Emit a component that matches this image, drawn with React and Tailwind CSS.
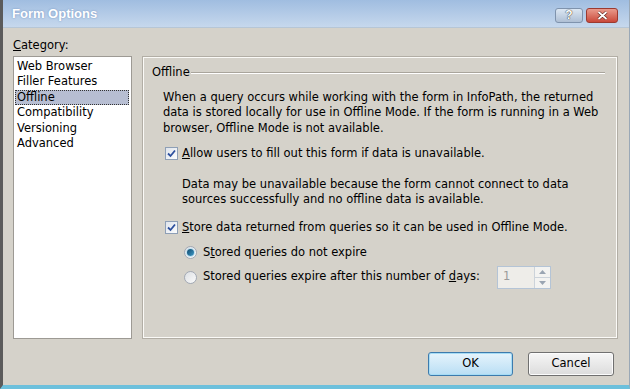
import React from 'react';

const font = "font-['DejaVu_Sans',Tahoma,sans-serif]";

function CheckBox() {
  return (
    <span className="w-[13px] h-[13px] shrink-0 border border-[#8e9fb6] bg-gradient-to-br from-[#dfe4ec] to-[#fbfcfd] flex items-center justify-center">
      <svg width="9" height="9" viewBox="0 0 9 9">
        <path d="M1 4.5 L3.5 7 L8 1.5" fill="none" stroke="#2c4f9e" strokeWidth="1.8" />
      </svg>
    </span>
  );
}

function Radio({ checked }) {
  return (
    <span className="w-[13px] h-[13px] shrink-0 rounded-full border border-[#a2a9b4] bg-gradient-to-br from-[#dcdfe3] to-[#fbfbfb] flex items-center justify-center">
      {checked && (
        <span className="w-[7px] h-[7px] rounded-full bg-gradient-to-br from-[#0f4a6e] to-[#3e9bc9] shadow-[0_0_0_1px_#bfe0f0]" />
      )}
    </span>
  );
}

function App() {
  const items = ['Web Browser', 'Filler Features', 'Offline', 'Compatibility', 'Versioning', 'Advanced'];

  return (
    <div className={`w-[630px] h-[389px] flex flex-col bg-[#d5d2ca] border-l-[3px] border-l-[#5b5b5b] border-b-[4px] border-b-[#6cc0dc] border-r border-r-[#9aa8b6] text-[11.5px] text-black ${font}`}>
      {/* Title bar */}
      <div className="h-[28px] shrink-0 flex items-center justify-between pl-[9px] pr-[11px] bg-gradient-to-b from-[#a0bde0] to-[#c6d8ed] border-b border-[#b6c6d6]">
        <span className="font-['Liberation_Sans',Arial,sans-serif] font-bold text-[13px] text-white [text-shadow:0_0_2px_#6f8fbf]">
          Form Options
        </span>
        <div className="flex items-center gap-[3px] mt-[3px]">
          <div className="w-[28px] h-[15px] rounded-[3px] border border-[#7f93ad] bg-gradient-to-b from-[#dce7f3] to-[#aebfd4] flex items-center justify-center">
            <span className="font-['Liberation_Sans',Arial,sans-serif] font-bold text-[12px] leading-none text-white [text-shadow:0_0_1px_#333,0_0_1px_#333]">?</span>
          </div>
          <div className="w-[32px] h-[15px] rounded-[3px] border border-[#9c3a30] bg-gradient-to-b from-[#e99a8c] to-[#c9473a] flex items-center justify-center">
            <svg width="11" height="9" viewBox="0 0 11 9">
              <path d="M1.5 1 L9.5 8 M9.5 1 L1.5 8" stroke="#5a1f18" strokeWidth="3" />
              <path d="M1.5 1 L9.5 8 M9.5 1 L1.5 8" stroke="#ffffff" strokeWidth="1.8" />
            </svg>
          </div>
        </div>
      </div>

      {/* Body */}
      <div className="flex gap-[11px] pl-[10px] pr-[10px] pt-[10px]">
        <div className="w-[119px] shrink-0 flex flex-col">
          <div className="leading-[15.5px]">
            <u>C</u>ategory:
          </div>
          <div className="mt-[2px] h-[283px] bg-white border border-[#9d9a94] pl-[1px] pr-[2px] pt-[2px]">
            {items.map((it) => (
              <div
                key={it}
                className={`leading-[15.5px] pl-[2px] whitespace-nowrap ${
                  it === 'Offline' ? 'bg-[#b7bed2] outline-1 outline-dotted outline-[#333] -outline-offset-1' : ''
                }`}
              >
                {it}
              </div>
            ))}
          </div>
        </div>

        <div className="mt-[19px] w-[474px] h-[281px] border border-[#fbfaf7] shadow-[0_0_0_1px_#b2aea5] pl-[8px] pr-[11px] pt-[7px] flex flex-col">
          <div className="flex items-center gap-[1px] leading-[15.5px]">
            <span>Offline</span>
            <span className="flex-1 h-[2px] border-t border-[#a9a59c] border-b border-b-white mt-[1px]" />
          </div>

          <div className="ml-[11px] mt-[9px] leading-[15.5px] whitespace-nowrap">
            <div>When a query occurs while working with the form in InfoPath, the returned</div>
            <div>data is stored locally for use in Offline Mode. If the form is running in a Web</div>
            <div>browser, Offline Mode is not available.</div>
          </div>

          <div className="ml-[13px] mt-[10px] flex items-center gap-[4px] leading-[15.5px]">
            <CheckBox />
            <span>
              <u>A</u>llow users to fill out this form if data is unavailable.
            </span>
          </div>

          <div className="ml-[30px] mt-[15px] leading-[15.5px] whitespace-nowrap">
            <div>Data may be unavailable because the form cannot connect to data</div>
            <div>sources successfully and no offline data is available.</div>
          </div>

          <div className="ml-[13px] mt-[12px] flex items-center gap-[4px] leading-[15.5px]">
            <CheckBox />
            <span>
              <u>S</u>tore data returned from queries so it can be used in Offline Mode.
            </span>
          </div>

          <div className="ml-[32px] mt-[10px] flex items-center gap-[6px] leading-[15.5px]">
            <Radio checked />
            <span>
              S<u>t</u>ored queries do not expire
            </span>
          </div>

          <div className="ml-[32px] mt-[5px] flex items-center leading-[15.5px]">
            <Radio />
            <span className="ml-[6px] w-[294px]">
              Stored queries expire after this number of <u>d</u>ays:
            </span>
            <div className="w-[54px] h-[23px] flex border border-[#b4c4d6] bg-[#eeede9]">
              <div className="flex-1 pl-[5px] flex items-center text-[#9a9a9a]">1</div>
              <div className="w-[16px] flex flex-col border-l border-[#ccd3da] bg-[#f3f3f1]">
                <div className="flex-1 flex items-center justify-center border-b border-[#ccd3da]">
                  <svg width="7" height="4" viewBox="0 0 7 4"><path d="M0 4 L3.5 0 L7 4Z" fill="#9aa5b2" /></svg>
                </div>
                <div className="flex-1 flex items-center justify-center">
                  <svg width="7" height="4" viewBox="0 0 7 4"><path d="M0 0 L3.5 4 L7 0Z" fill="#9aa5b2" /></svg>
                </div>
              </div>
            </div>
          </div>
        </div>
      </div>

      {/* Buttons */}
      <div className="flex justify-end gap-[15px] pr-[15px] mt-[13px]">
        <button className="w-[85px] h-[24px] rounded-[3px] border border-[#3d7bad] bg-gradient-to-b from-[#e6f4fc] to-[#b9def4] shadow-[inset_0_0_0_1px_#a6dcf5] flex items-center justify-center">
          OK
        </button>
        <button className="w-[86px] h-[24px] rounded-[3px] border border-[#707070] bg-gradient-to-b from-[#f6f6f6] to-[#dcdcdc] shadow-[inset_0_0_0_1px_#fcfcfc] flex items-center justify-center">
          Cancel
        </button>
      </div>
    </div>
  );
}

export default App;
